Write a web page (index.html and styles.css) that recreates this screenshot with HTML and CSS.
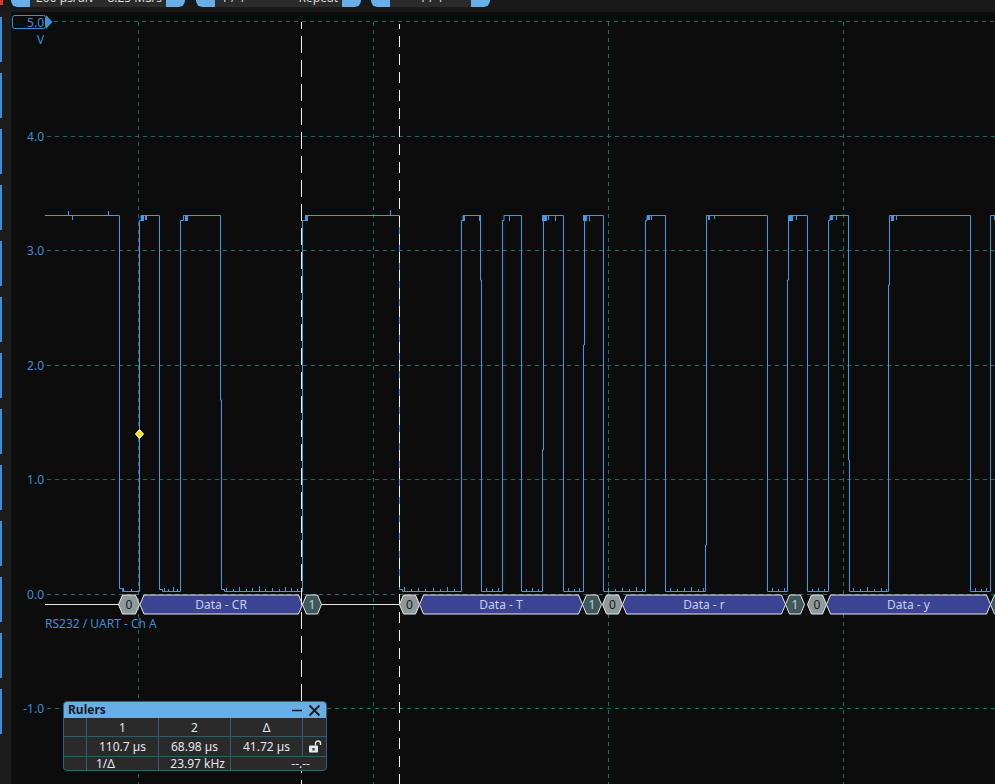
FILE: index.html
```html
<!DOCTYPE html>
<html>
<head>
<meta charset="utf-8">
<link rel="stylesheet" href="styles.css">
</head>
<body>
<div class="app">
  <div class="toolbar">
    <div class="ctl ctl-1"><span class="cap cap-l"></span><span class="mid"><span>200 µs/div</span><span>8.25 MS/s</span></span><span class="cap cap-r"></span></div>
    <div class="ctl ctl-2"><span class="cap cap-l"></span><span class="mid"><span>1 / 1</span><span>Repeat</span></span><span class="cap cap-r"></span></div>
    <div class="ctl ctl-3"><span class="cap cap-l"></span><span class="mid mid-c"><span>1 / 1</span></span><span class="cap cap-r"></span></div>
  </div>
  <div class="main">
    <div class="sidebar">
      <span class="tab"></span><span class="tab"></span><span class="tab"></span><span class="tab"></span><span class="tab"></span><span class="tab"></span><span class="tab"></span><span class="tab"></span><span class="tab"></span><span class="tab"></span><span class="tab"></span><span class="tab"></span><span class="tab"></span>
    </div>
    <div class="plot">
      <svg class="scope" width="983" height="772" viewBox="12 12 983 772" xmlns="http://www.w3.org/2000/svg">
        <g class="grid" stroke="#1b6a6c" stroke-width="1" stroke-dasharray="4 4" fill="none">
          <line x1="54" y1="21.5" x2="995" y2="21.5"/>
          <line x1="47" y1="136.5" x2="995" y2="136.5"/>
          <line x1="47" y1="250.5" x2="995" y2="250.5"/>
          <line x1="47" y1="365.5" x2="995" y2="365.5"/>
          <line x1="47" y1="479.5" x2="995" y2="479.5"/>
          <line x1="47" y1="594.5" x2="995" y2="594.5"/>
          <line x1="47" y1="708.5" x2="995" y2="708.5"/>
          <line x1="138.5" y1="22" x2="138.5" y2="784"/>
          <line x1="373.5" y1="22" x2="373.5" y2="784"/>
          <line x1="608.5" y1="22" x2="608.5" y2="784"/>
          <line x1="843.5" y1="22" x2="843.5" y2="784"/>
        </g>
        <g class="ylabels" fill="#3b8fd6" font-family="Noto Sans, Liberation Sans, sans-serif" font-size="12" text-anchor="end">
          <rect x="12.5" y="15.5" width="33" height="13" rx="2" fill="#0c0c0c" stroke="#3b8fd6"/>
          <polygon points="46,15 52.5,22 46,29" fill="#3b8fd6"/>
          <text x="44" y="26.5">5.0</text>
          <text x="40.5" y="44" text-anchor="middle">V</text>
          <text x="44" y="140.5">4.0</text>
          <text x="44" y="254.5">3.0</text>
          <text x="44" y="369.5">2.0</text>
          <text x="44" y="483.5">1.0</text>
          <text x="44" y="598.5">0.0</text>
          <text x="44" y="712.5">-1.0</text>
        </g>
        <g class="trace" fill="none" stroke="#3d9be9" stroke-width="1">
          <path d="M45,215.5 H119.5 V588.5 H122.5 V591.5 H139.5 V220.5 H141 V215.5 H159.5 V589.5 H162.5 V591.5 H180.5 V220.5 H183.5 V215.5 H220.5 V400 H221.5 V589.5 H224.5 V591.5 H302.5 V220.5 H305.5 V215.5 H399.5 V589.5 H402.5 V591.5 H461.5 V220.5 H463 V215.5 H480.5 V280 H481.5 V591.5 H502.5 V220.5 H504 V215.5 H521.5 V591.5 H542.5 V450 H543.5 V215.5 H563.5 V591.5 H583.5 V345 H584.5 V215.5 H603.5 V591.5 H645.5 V220.5 H647 V215.5 H665.5 V591.5 H705.5 V545 H706.5 V215.5 H767.5 V591.5 H787.5 V280 H788.5 V215.5 H807.5 V591.5 H828.5 V220.5 H830 V215.5 H848.5 V460 H849.5 V591.5 H888.5 V285 H889.5 V215.5 H970.5 V591.5 H990.5 V215.5 H996"/>
          <path d="M68.5,215 v-4 M72.5,216 v4 M108.5,215 v-4 M390.5,215 v-5 M509.5,216 v5 M548.5,216 v4 M555.5,216 v5 M589.5,216 v5 M651.5,216 v4 M714.5,216 v3 M796.5,216 v4 M836.5,216 v4 M896.5,216 v4 M994.5,216 v4"/>
          <path d="M123.5,591 v-3 M131.5,591 v-2 M164.5,591 v-3 M168.5,591 v-2 M173.5,591 v-4 M177.5,591 v-2 M226.5,591 v-3 M233.5,591 v-2 M239.5,591 v-4 M246.5,591 v-2 M252.5,591 v-3 M259.5,591 v-5 M265.5,591 v-2 M272.5,591 v-3 M279.5,591 v-2 M285.5,591 v-4 M291.5,591 v-3 M297.5,591 v-2 M404.5,591 v-4 M411.5,591 v-2 M418.5,591 v-3 M425.5,591 v-2 M433.5,591 v-3 M440.5,591 v-2 M447.5,591 v-4 M454.5,591 v-2 M486.5,591 v-3 M492.5,591 v-2 M498.5,591 v-3 M526.5,591 v-2 M532.5,591 v-3 M538.5,591 v-2 M568.5,591 v-3 M574.5,591 v-2 M579.5,591 v-3 M608.5,591 v-3 M615.5,591 v-2 M622.5,591 v-3 M629.5,591 v-2 M636.5,591 v-4 M642.5,591 v-2 M670.5,591 v-3 M677.5,591 v-2 M684.5,591 v-3 M691.5,591 v-4 M698.5,591 v-2 M703.5,591 v-3 M772.5,591 v-3 M778.5,591 v-2 M784.5,591 v-3 M812.5,591 v-2 M818.5,591 v-3 M824.5,591 v-2 M853.5,591 v-3 M860.5,591 v-2 M867.5,591 v-4 M874.5,591 v-2 M881.5,591 v-3 M886.5,591 v-2 M975.5,591 v-3 M981.5,591 v-2 M986.5,591 v-3"/>
        </g>
        <g class="blobs" fill="#3d9be9">
          <rect x="141" y="215" width="3" height="6"/>
          <rect x="145" y="215" width="2" height="5"/>
          <rect x="185" y="215" width="3" height="6"/>
          <rect x="305" y="215" width="3" height="6"/>
          <rect x="463" y="215" width="2" height="6"/>
          <rect x="479" y="215" width="2" height="6"/>
          <rect x="542" y="215" width="5" height="6"/>
          <rect x="583" y="215" width="4" height="6"/>
          <rect x="647" y="215" width="3" height="5"/>
          <rect x="708" y="215" width="2" height="5"/>
          <rect x="789" y="215" width="4" height="6"/>
          <rect x="830" y="215" width="3" height="5"/>
          <rect x="891" y="215" width="3" height="6"/>
        </g>
        <g class="decode" stroke="#e8e8e8" stroke-width="1" font-family="Noto Sans, Liberation Sans, sans-serif" font-size="12" text-anchor="middle">
          <line x1="45" y1="604.5" x2="119" y2="604.5"/>
          <line x1="321" y1="604.5" x2="400" y2="604.5"/>
          <polygon points="118.5,604.5 122.5,595 135.5,595 139.5,604.5 135.5,614 122.5,614" fill="#8e999c"/>
          <polygon points="140,604.5 144,595 298.5,595 302.5,604.5 298.5,614 144,614" fill="#3a4493"/>
          <polygon points="302.5,604.5 306.5,595 317.5,595 321.5,604.5 317.5,614 306.5,614" fill="#3e585c"/>
          <polygon points="399.5,604.5 403.5,595 415.5,595 419.5,604.5 415.5,614 403.5,614" fill="#8e999c"/>
          <polygon points="419.5,604.5 423.5,595 578.5,595 582.5,604.5 578.5,614 423.5,614" fill="#3a4493"/>
          <polygon points="582.5,604.5 586.5,595 597.5,595 601.5,604.5 597.5,614 586.5,614" fill="#3e585c"/>
          <polygon points="602.5,604.5 606.5,595 618.5,595 622.5,604.5 618.5,614 606.5,614" fill="#8e999c"/>
          <polygon points="622.5,604.5 626.5,595 781.5,595 785.5,604.5 781.5,614 626.5,614" fill="#3a4493"/>
          <polygon points="785.5,604.5 789.5,595 800.5,595 804.5,604.5 800.5,614 789.5,614" fill="#3e585c"/>
          <polygon points="807.5,604.5 811.5,595 822.5,595 826.5,604.5 822.5,614 811.5,614" fill="#8e999c"/>
          <polygon points="826.5,604.5 830.5,595 986.5,595 990.5,604.5 986.5,614 830.5,614" fill="#3a4493"/>
          <polygon points="990.5,604.5 994.5,595 1005,595 1005,614 994.5,614" fill="#3e585c"/>
          <g stroke="none">
            <text x="129" y="609" fill="#15191a">0</text>
            <text x="221" y="609" fill="#c9cdf0">Data - CR</text>
            <text x="312" y="609" fill="#c6d0d2">1</text>
            <text x="409.5" y="609" fill="#15191a">0</text>
            <text x="501" y="609" fill="#c9cdf0">Data - T</text>
            <text x="592" y="609" fill="#c6d0d2">1</text>
            <text x="612.5" y="609" fill="#15191a">0</text>
            <text x="704" y="609" fill="#c9cdf0">Data - r</text>
            <text x="795" y="609" fill="#c6d0d2">1</text>
            <text x="817" y="609" fill="#15191a">0</text>
            <text x="908.5" y="609" fill="#c9cdf0">Data - y</text>
          </g>
          <text x="45" y="628" fill="#3b8fd6" stroke="none" text-anchor="start">RS232 / UART - Ch A</text>
        </g>
        <line x1="301.5" y1="22" x2="301.5" y2="784" stroke="#f0f0f0" stroke-dasharray="17 7" stroke-dashoffset="10"/>
        <line x1="399.5" y1="24" x2="399.5" y2="784" stroke="#f0f0f0" stroke-dasharray="11 7" stroke-dashoffset="6"/>
        <polygon points="139.5,429.5 143.5,434 139.5,438.5 135.5,434" fill="#f4e300" stroke="#ffffff" stroke-width="1"/>
      </svg>
      <div class="rulers">
        <div class="rulers-head">
          <span class="rulers-title">Rulers</span>
          <span class="rulers-icons">
            <svg width="12" height="12" viewBox="0 0 12 12"><line x1="1" y1="6.5" x2="11" y2="6.5" stroke="#1a1a1a" stroke-width="1.6"/></svg>
            <svg width="13" height="13" viewBox="0 0 13 13"><path d="M1.5 1.5 L11.5 11.5 M11.5 1.5 L1.5 11.5" stroke="#1a1a1a" stroke-width="1.8"/></svg>
          </span>
        </div>
        <table class="rulers-table">
          <tr class="r-head"><td></td><td>1</td><td>2</td><td>Δ</td><td></td></tr>
          <tr class="r-vals"><td></td><td>110.7 µs</td><td>68.98 µs</td><td>41.72 µs</td><td class="lock"><svg width="14" height="13" viewBox="0 0 14 13"><rect x="1" y="5.5" width="9" height="7" rx="1" fill="#e6e9ee"/><path d="M7.5 5.5 V3.5 A2.5 2.5 0 0 1 12.5 3.5 V5" fill="none" stroke="#e6e9ee" stroke-width="1.4"/><rect x="4.5" y="8" width="2" height="2.5" fill="#2a2a2a"/></svg></td></tr>
          <tr class="r-freq"><td></td><td class="left">1/Δ</td><td class="right">23.97 kHz</td><td class="dash" colspan="2">--.--</td></tr>
        </table>
      </div>
    </div>
  </div>
</div>
</body>
</html>
```

FILE: styles.css
```css
html, body {
  margin: 0;
  padding: 0;
  background: #0c0c0c;
}
body {
  width: 995px;
  height: 784px;
  overflow: hidden;
  font-family: "Noto Sans", "Liberation Sans", sans-serif;
}
.app {
  display: flex;
  flex-direction: column;
  width: 995px;
  height: 784px;
}
.toolbar {
  height: 12px;
  flex: none;
  background: #191919;
  display: flex;
  align-items: flex-end;
  gap: 11px;
  padding: 0 0 5px 11px;
  box-sizing: border-box;
  overflow: hidden;
  position: relative;
}
.toolbar::before {
  content: "";
  position: absolute;
  left: 0;
  top: 0;
  width: 3px;
  height: 5px;
  background: #d93a2a;
}
.ctl {
  flex: none;
  display: flex;
  height: 22px;
  border-radius: 0 0 6px 6px;
  overflow: hidden;
  background: #2b2b2b;
}
.ctl-1 { width: 174px; }
.ctl-2 { width: 165px; }
.ctl-3 { width: 119px; margin-left: -1px; }
.cap {
  flex: none;
  width: 19px;
  background: #6aaee8;
}
.cap-l { border-radius: 0 0 0 6px; }
.cap-r { border-radius: 0 0 6px 0; }
.mid {
  flex: 1;
  display: flex;
  justify-content: space-between;
  align-items: flex-end;
  padding: 0 4px 3px 6px;
  color: #d8d8d8;
  font-size: 12px;
  line-height: 12px;
}
.mid-c { justify-content: center; }
.main {
  flex: 1;
  display: flex;
  min-height: 0;
}
.sidebar {
  width: 11px;
  flex: none;
  background: #1c1c1c;
  display: flex;
  flex-direction: column;
  gap: 11px;
  padding-top: 5px;
  border-right: 1px solid #121212;
}
.tab {
  width: 2px;
  height: 45px;
  background: #3d8fd8;
  flex: none;
}
.plot {
  flex: 1;
  position: relative;
  background: #0c0c0c;
  overflow: hidden;
}
.scope {
  display: block;
}
.rulers {
  position: absolute;
  left: 51px;
  top: 689px;
  width: 264px;
  border: 1px solid #2d6670;
  border-radius: 4px;
  overflow: hidden;
  background: #2a2a2a;
  box-sizing: border-box;
}
.rulers-head {
  height: 16px;
  background: #6aaee6;
  display: flex;
  align-items: center;
  justify-content: space-between;
  padding: 0 5px 0 4px;
}
.rulers-title {
  font-size: 12px;
  font-weight: bold;
  color: #1a1a1a;
  line-height: 16px;
}
.rulers-icons {
  display: flex;
  align-items: center;
  gap: 5px;
}
.rulers-icons svg { display: block; }
.rulers-table {
  border-collapse: collapse;
  width: 100%;
  table-layout: fixed;
  color: #e2e7ee;
  font-size: 12px;
}
.rulers-table td {
  border: 1px solid #2e5e68;
  padding: 0;
  text-align: center;
  white-space: nowrap;
}
.rulers-table tr td:first-child { width: 22px; border-left: none; }
.rulers-table tr td:last-child { border-right: none; }
.rulers-table tr:first-child td { border-top: none; }
.rulers-table tr:last-child td { border-bottom: none; }
.rulers-table td:nth-child(2),
.rulers-table td:nth-child(3),
.rulers-table td:nth-child(4) { width: 71px; }
.r-head td { height: 18px; }
.r-vals td { height: 19px; }
.r-freq td { height: 13px; line-height: 13px; }
.rulers-table td.left { text-align: left; padding-left: 9px; }
.rulers-table td.right { text-align: right; padding-right: 5px; }
.rulers-table td.dash { text-align: right; padding-right: 16px; }
.rulers-table td.lock svg { display: block; margin: 0 auto; }
```
